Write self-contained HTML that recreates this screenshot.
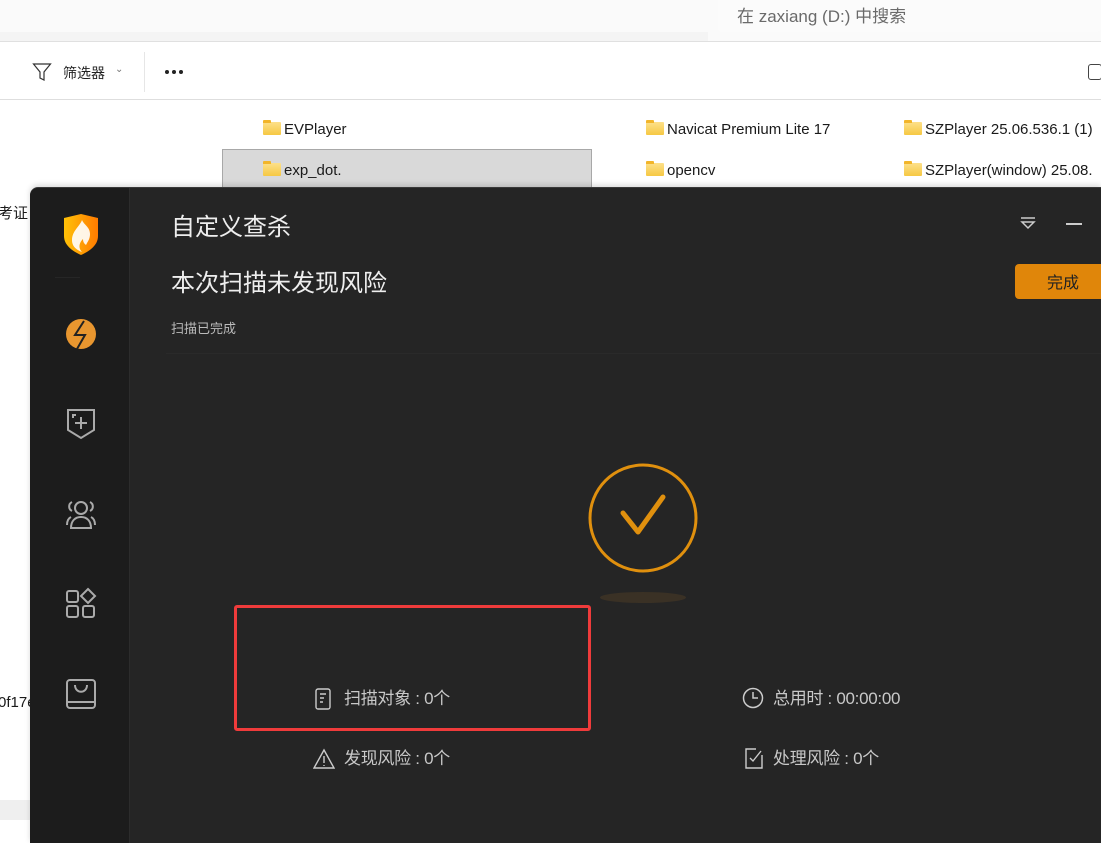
<!DOCTYPE html>
<html><head><meta charset="utf-8"><style>
*{margin:0;padding:0;box-sizing:border-box}
body{width:1101px;height:843px;overflow:hidden;background:#fff;position:relative;font-family:"Liberation Sans","Noto Sans CJK SC",sans-serif}
.a{position:absolute;white-space:nowrap}
.fold{position:absolute;width:18px;height:13px;background:linear-gradient(#fde08a,#f6c843);border-radius:1px}
.fold:before{content:"";position:absolute;left:0;top:-2px;width:8px;height:3px;background:#f2b52a;border-radius:1px 1px 0 0}
.ft{font-size:15px;color:#1a1a1a}
.st{font-size:17px;color:#c8c8c8;letter-spacing:-0.3px}
</style></head><body>
<div class="a" style="left:0;top:0;width:1101px;height:41px;background:#fafafa"></div>
<div class="a" style="left:0;top:32px;width:708px;height:9px;background:#f4f4f4"></div>
<div class="a" style="left:718px;top:0;width:383px;height:32px;background:#fbfbfb;border-radius:0 0 4px 4px"></div>
<div class="a" style="left:737px;top:2px;font-size:17px;color:#6a6a6a">在 zaxiang (D:) 中搜索</div>
<div class="a" style="left:0;top:41px;width:1101px;height:1px;background:#e0e0e0"></div>
<svg class="a" style="left:32px;top:62px" width="20" height="20" viewBox="0 0 20 20"><path d="M1.5 2h17l-6.5 8v8l-4-2v-6z" fill="none" stroke="#333" stroke-width="1.2"/></svg>
<div class="a" style="left:63px;top:63px;font-size:14px;color:#222">筛选器</div>
<div class="a" style="left:115px;top:64px;font-size:10px;color:#777">⌄</div>
<div class="a" style="left:144px;top:52px;width:1px;height:40px;background:#e6e6e6"></div>
<div class="a" style="left:165px;top:70px;width:4px;height:4px;border-radius:2px;background:#222;box-shadow:7px 0 #222,14px 0 #222"></div>
<div class="a" style="left:1088px;top:64px;width:14px;height:16px;border:1.5px solid #444;border-radius:3px"></div>
<div class="a" style="left:0;top:99px;width:1101px;height:1px;background:#dedede"></div>
<div class="fold" style="left:263px;top:122px"></div><div class="a ft" style="left:284px;top:121px">EVPlayer</div>
<div class="a" style="left:222px;top:149px;width:370px;height:40px;background:#d9d9d9;border:1px solid #a8a8a8"></div>
<div class="fold" style="left:263px;top:163px"></div><div class="a ft" style="left:284px;top:162px">exp_dot.</div>
<div class="fold" style="left:646px;top:122px"></div><div class="a ft" style="left:667px;top:121px">Navicat Premium Lite 17</div>
<div class="fold" style="left:646px;top:163px"></div><div class="a ft" style="left:667px;top:162px">opencv</div>
<div class="fold" style="left:904px;top:122px"></div><div class="a ft" style="left:925px;top:121px">SZPlayer 25.06.536.1 (1)</div>
<div class="fold" style="left:904px;top:163px"></div><div class="a ft" style="left:925px;top:162px">SZPlayer(window) 25.08.</div>
<div class="a ft" style="left:-2px;top:202px">考证</div>
<div class="a ft" style="left:-2px;top:694px">0f17e</div>
<div class="a" style="left:0;top:800px;width:30px;height:20px;background:#efefef"></div>

<div class="a" style="left:30px;top:187px;width:1071px;height:656px;background:#252525;border-radius:8px 0 0 0;border-top:1px solid #3a3a3a;box-shadow:0 -2px 6px rgba(0,0,0,.15)"></div>
<div class="a" style="left:30px;top:188px;width:100px;height:655px;background:#1c1c1c;border-radius:8px 0 0 0;border-right:1px solid #2c2c2c"></div>
<svg class="a" style="left:63px;top:213px" width="36" height="42" viewBox="0 0 36 42"><defs><linearGradient id="g" x1="0" x2="1"><stop offset="0" stop-color="#ffc107"/><stop offset="1" stop-color="#ff7b00"/></linearGradient></defs><path d="M1 5L18 1l17 4v18c0 9-8 15-17 19C9 38 1 32 1 23z" fill="url(#g)"/><path d="M19 7c-2 6-10 11-10 20 0 7 5 10 10 12-3-3-4-8 1-13 0 4 2 5 3 6 2-4 4-6 4-11 0-7-6-9-8-14z" fill="#fff" opacity=".9"/></svg>
<div class="a" style="left:55px;top:277px;width:25px;height:1px;background:#262626"></div>
<svg class="a" style="left:65px;top:318px" width="32" height="32" viewBox="0 0 32 32"><circle cx="16" cy="16" r="15" fill="#e8962f"/><path d="M19 3L10 17h10l-8 14" fill="none" stroke="#222" stroke-width="2"/></svg>
<svg class="a" style="left:64px;top:407px" width="34" height="34" viewBox="0 0 34 34" fill="none" stroke="#aaa" stroke-width="2"><path d="M4 3h26v20l-13 8L4 23z"/><path d="M17 10v12M11 16h12M9 11V8h3"/></svg>
<svg class="a" style="left:64px;top:497px" width="34" height="34" viewBox="0 0 34 34" fill="none" stroke="#aaa" stroke-width="2"><circle cx="17" cy="11" r="6"/><path d="M7 31c0-7 4-11 10-11s10 4 10 11z"/><path d="M8 5a5 5 0 0 0 0 9M26 5a5 5 0 0 1 0 9M3 28c0-5 2-7 4-8M31 28c0-5-2-7-4-8"/></svg>
<svg class="a" style="left:64px;top:587px" width="34" height="34" viewBox="0 0 34 34" fill="none" stroke="#aaa" stroke-width="2"><rect x="3" y="4" width="11" height="11" rx="2"/><rect x="3" y="19" width="11" height="11" rx="2"/><rect x="19" y="19" width="11" height="11" rx="2"/><path d="M24 2l7 7-7 7-7-7z"/></svg>
<svg class="a" style="left:64px;top:677px" width="34" height="34" viewBox="0 0 34 34" fill="none" stroke="#aaa" stroke-width="2"><rect x="3" y="3" width="28" height="28" rx="3"/><path d="M3 25h28M11 8c0 9 12 9 12 0"/></svg>

<div class="a" style="left:171px;top:207px;font-size:24px;color:#eee">自定义查杀</div>
<div class="a" style="left:171px;top:263px;font-size:24px;color:#eee">本次扫描未发现风险</div>
<div class="a" style="left:171px;top:318px;font-size:13px;color:#bbb">扫描已完成</div>
<div class="a" style="left:166px;top:353px;width:935px;height:1px;background:#2a2a2a"></div>
<svg class="a" style="left:1019px;top:216px" width="18" height="16" viewBox="0 0 18 16" fill="none" stroke="#ccc" stroke-width="1.5"><path d="M2 2h14M3 6h12l-6 6z"/></svg>
<div class="a" style="left:1066px;top:223px;width:16px;height:2px;background:#ccc"></div>
<div class="a" style="left:1015px;top:264px;width:90px;height:35px;background:#e0860a;border-radius:4px;color:#222;font-size:16px;padding:5px 0 0 32px">完成</div>

<svg class="a" style="left:586px;top:462px" width="114" height="114" viewBox="0 0 114 114"><circle cx="57" cy="56" r="53" fill="none" stroke="#e0900e" stroke-width="3"/><path d="M37 51l15 19 25-35" fill="none" stroke="#e0900e" stroke-width="5" stroke-linecap="round" stroke-linejoin="round"/></svg>
<div class="a" style="left:600px;top:592px;width:86px;height:11px;border-radius:50%;background:#3a3125"></div>

<div class="a" style="left:234px;top:605px;width:357px;height:126px;border:3px solid #ef3b3b;border-radius:3px"></div>
<svg class="a" style="left:314px;top:688px" width="18" height="22" viewBox="0 0 18 22" fill="none" stroke="#ccc" stroke-width="1.4"><rect x="2" y="1" width="14" height="20" rx="2"/><path d="M6 6h6M6 10h4M6 14h3"/></svg>
<div class="a st" style="left:344px;top:684px">扫描对象 : 0个</div>
<svg class="a" style="left:742px;top:687px" width="22" height="22" viewBox="0 0 22 22" fill="none" stroke="#ccc" stroke-width="1.5"><circle cx="11" cy="11" r="9.5"/><path d="M11 5v6h5"/></svg>
<div class="a st" style="left:773px;top:684px">总用时 : 00:00:00</div>
<svg class="a" style="left:313px;top:748px" width="22" height="22" viewBox="0 0 22 22" fill="none" stroke="#ccc" stroke-width="1.4"><path d="M11 2L1 20h20z"/><path d="M11 8v7M11 17v1"/></svg>
<div class="a st" style="left:344px;top:744px">发现风险 : 0个</div>
<svg class="a" style="left:743px;top:747px" width="22" height="22" viewBox="0 0 22 22" fill="none" stroke="#ccc" stroke-width="1.4"><path d="M13 2H3v19h16V8"/><path d="M7 11l3 3 8-10"/></svg>
<div class="a st" style="left:773px;top:744px">处理风险 : 0个</div>
</body></html>
